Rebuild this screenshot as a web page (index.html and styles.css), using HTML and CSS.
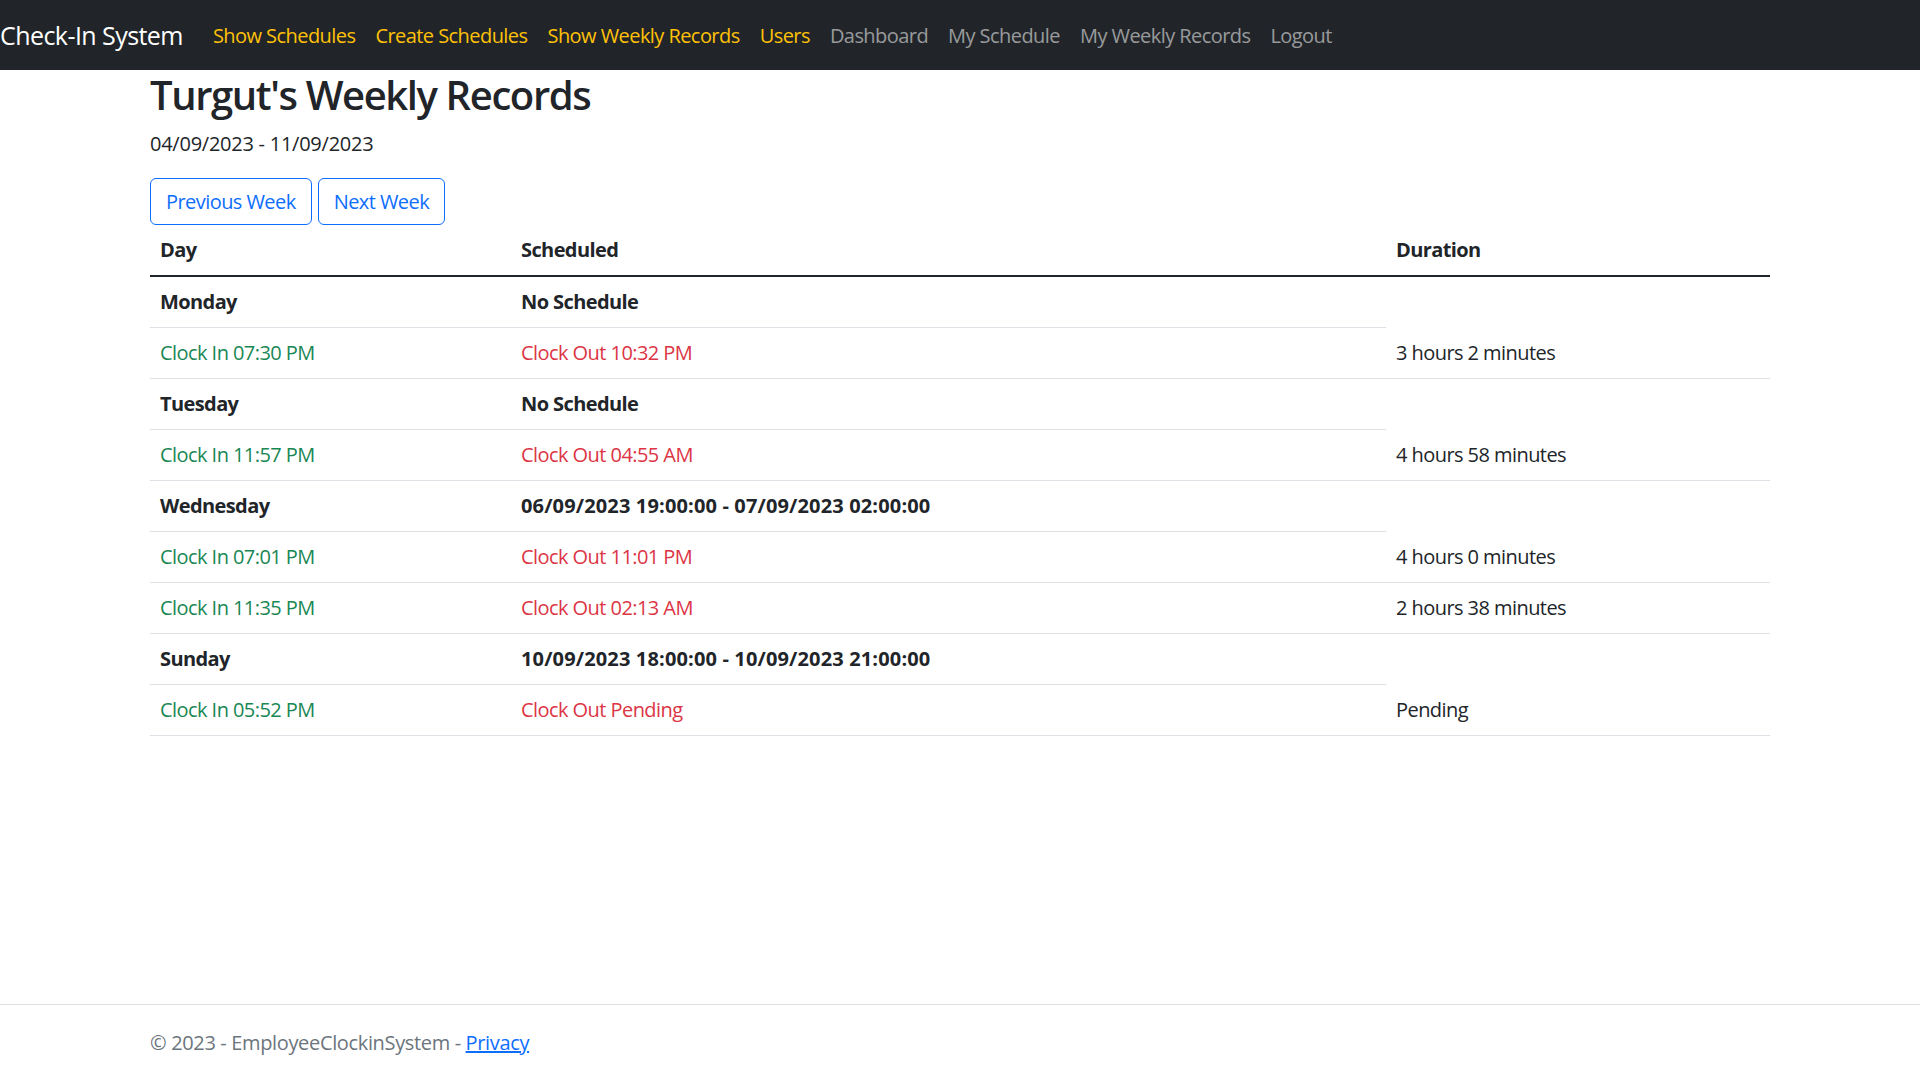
FILE: index.html
```html
<!DOCTYPE html>
<html lang="en">
<head>
<meta charset="utf-8">
<title>Turgut's Weekly Records - Check-In System</title>
<link rel="stylesheet" href="styles.css">
</head>
<body>
<header>
  <nav class="navbar">
    <a class="navbar-brand" href="#">Check-In System</a>
    <ul class="navbar-nav">
      <li><a class="nav-link nav-admin" href="#">Show Schedules</a></li>
      <li><a class="nav-link nav-admin" href="#">Create Schedules</a></li>
      <li><a class="nav-link nav-admin" href="#">Show Weekly Records</a></li>
      <li><a class="nav-link nav-admin" href="#">Users</a></li>
      <li><a class="nav-link" href="#">Dashboard</a></li>
      <li><a class="nav-link" href="#">My Schedule</a></li>
      <li><a class="nav-link" href="#">My Weekly Records</a></li>
      <li><a class="nav-link" href="#">Logout</a></li>
    </ul>
  </nav>
</header>
<div class="container">
  <main class="main" role="main">
    <h2 class="page-title">Turgut's Weekly Records</h2>
    <p class="week-range">04/09/2023 - 11/09/2023</p>
    <div class="week-nav">
      <a class="btn" href="#">Previous Week</a>
      <a class="btn" href="#">Next Week</a>
    </div>
    <table class="table">
      <colgroup>
        <col class="col-day">
        <col class="col-scheduled">
        <col class="col-duration">
      </colgroup>
      <thead>
        <tr><th>Day</th><th>Scheduled</th><th>Duration</th></tr>
      </thead>
      <tbody>
        <tr class="day-row"><td>Monday</td><td>No Schedule</td></tr>
        <tr><td class="clock-in">Clock In 07:30 PM</td><td class="clock-out">Clock Out 10:32 PM</td><td>3 hours 2 minutes</td></tr>
        <tr class="day-row"><td>Tuesday</td><td>No Schedule</td></tr>
        <tr><td class="clock-in">Clock In 11:57 PM</td><td class="clock-out">Clock Out 04:55 AM</td><td>4 hours 58 minutes</td></tr>
        <tr class="day-row"><td>Wednesday</td><td class="range">06/09/2023 19:00:00 - 07/09/2023 02:00:00</td></tr>
        <tr><td class="clock-in">Clock In 07:01 PM</td><td class="clock-out">Clock Out 11:01 PM</td><td>4 hours 0 minutes</td></tr>
        <tr><td class="clock-in">Clock In 11:35 PM</td><td class="clock-out">Clock Out 02:13 AM</td><td>2 hours 38 minutes</td></tr>
        <tr class="day-row"><td>Sunday</td><td class="range">10/09/2023 18:00:00 - 10/09/2023 21:00:00</td></tr>
        <tr><td class="clock-in">Clock In 05:52 PM</td><td class="clock-out">Clock Out Pending</td><td>Pending</td></tr>
      </tbody>
    </table>
  </main>
</div>
<footer class="footer">
  <div class="container">&copy; 2023 - EmployeeClockinSystem - <a class="footer-link" href="#">Privacy</a></div>
</footer>
</body>
</html>
```
FILE: styles.css
```css
*, *::before, *::after { box-sizing: border-box; }

html, body { margin: 0; }

body {
  font-family: "Open Sans", "Noto Sans", sans-serif;
  font-size: 20px;
  line-height: 1.5;
  letter-spacing: -0.028em;
  color: #212529;
  background: #fff;
  min-height: 100vh;
  display: flex;
  flex-direction: column;
}

.navbar {
  display: flex;
  align-items: center;
  height: 70px;
  padding: 11px 0 9px;
  background: #212529;
}

.navbar-brand {
  font-size: 25px;
  line-height: 37.5px;
  padding: 6.25px 0;
  margin-right: 20px;
  color: #fff;
  text-decoration: none;
  white-space: nowrap;
}

.navbar-nav {
  display: flex;
  list-style: none;
  margin: 0;
  padding: 0;
}

.nav-link {
  display: block;
  padding: 10px;
  line-height: 30px;
  color: rgba(255, 255, 255, 0.55);
  text-decoration: none;
  white-space: nowrap;
}

.nav-link.nav-admin { color: #ffc107; }

.container {
  width: 1650px;
  margin: 0 auto;
  padding: 0 15px;
}

.main { padding: 1px 0 20px; }

.page-title {
  font-size: 40px;
  font-weight: 600;
  line-height: 1.2;
  letter-spacing: -1.4px;
  margin: 0 0 10px;
}

.week-range {
  margin: 0 0 19px;
  letter-spacing: -0.25px;
}

.week-nav {
  display: flex;
  gap: 6px;
}

.btn {
  display: inline-block;
  padding: 7.5px 15px;
  line-height: 30px;
  font-size: 20px;
  color: #0d6efd;
  border: 1px solid #0d6efd;
  border-radius: 6px;
  text-decoration: none;
}

.table {
  width: 100%;
  table-layout: fixed;
  border-collapse: collapse;
  margin-bottom: 20px;
}

.col-day { width: 361px; }
.col-scheduled { width: 875px; }
.col-duration { width: 384px; }

.table th,
.table td {
  padding: 10px;
  line-height: 30px;
  text-align: left;
  vertical-align: top;
  border-bottom: 1px solid #dee2e6;
}

.table th {
  font-weight: 700;
  letter-spacing: -0.6px;
  border-bottom: 2px solid #212529;
}

.day-row td {
  font-weight: 700;
  letter-spacing: -0.6px;
}

.day-row td.range { letter-spacing: 0.15px; }

.clock-in { color: #198754; }
.clock-out { color: #dc3545; }

.footer {
  margin-top: auto;
  border-top: 1px solid #dee2e6;
  line-height: 75px;
  color: #6c757d;
  letter-spacing: -0.35px;
  white-space: nowrap;
}

.footer-link { color: #0d6efd; text-decoration: underline; }
```
